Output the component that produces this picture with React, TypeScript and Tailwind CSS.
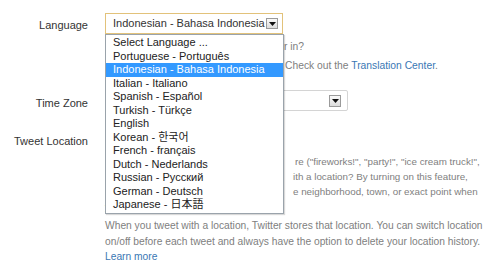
import React from "react";

const languages = [
  "Select Language ...",
  "Portuguese - Português",
  "Indonesian - Bahasa Indonesia",
  "Italian - Italiano",
  "Spanish - Español",
  "Turkish - Türkçe",
  "English",
  "Korean - 한국어",
  "French - français",
  "Dutch - Nederlands",
  "Russian - Русский",
  "German - Deutsch",
  "Japanese - 日本語",
];

function ArrowButton({ className }: { className: string }) {
  return (
    <span
      className={`flex items-center justify-center border border-[#9a9a9a] bg-gradient-to-b from-[#fafafa] to-[#dcdcdc] ${className}`}
    >
      <svg width="7" height="4" viewBox="0 0 7 4">
        <path d="M0 0h7L3.5 4z" fill="#111" />
      </svg>
    </span>
  );
}

// start of a line that sits under the open language list
function Hidden({ w, children }: { w: string; children: React.ReactNode }) {
  return <span className={`inline-block overflow-hidden whitespace-nowrap align-top ${w}`}>{children}</span>;
}

export default function App() {
  return (
    <div className="w-[500px] h-[273px] overflow-hidden bg-white font-['Liberation_Sans','Noto_Sans_CJK_KR','Noto_Sans_CJK_JP',sans-serif]">
      <div className="pt-[13px]">
        {/* Language */}
        <div className="flex">
          <div className="w-[88px] shrink-0 pt-[2px] text-right text-[11px] leading-[21px] text-[#333]">Language</div>
          <div className="ml-[17px] w-[385px]">
            <div className="relative w-[178px]">
              <div className="flex h-[21px] items-center justify-between border border-[#e2c27a] bg-white pl-[7px] pr-[4px] text-[11px] text-[#333]">
                <span className="whitespace-nowrap">Indonesian - Bahasa Indonesia</span>
                <ArrowButton className="h-[11px] w-[12px]" />
              </div>
              <ul className="absolute left-0 top-full z-10 w-[179px] border border-[#9aa3ab] bg-white py-[1px] shadow-[1px_1px_1px_rgba(0,0,0,0.15)]">
                {languages.map((l) => (
                  <li
                    key={l}
                    className={`h-[13.5px] whitespace-nowrap pl-[7px] text-[11px] leading-[13.5px] ${
                      l.startsWith("Indonesian") ? "bg-[#3399ff] text-white" : "text-[#222]"
                    }`}
                  >
                    {l}
                  </li>
                ))}
              </ul>
            </div>
            <p className="mt-[3px] whitespace-nowrap text-[10.3px] leading-[19px] text-[#808080]">
              <Hidden w="w-[179px]">What language would you like to Twitte</Hidden>r in?
              <br />
              <Hidden w="w-[180px]">Interested in helping translate Twitter?</Hidden>Check out the{" "}
              <a className="text-[#3a77b4]">Translation Center</a>.
            </p>
          </div>
        </div>

        {/* Time Zone */}
        <div className="mt-[15px] flex">
          <div className="w-[88px] shrink-0 pt-[3px] text-right text-[11px] leading-[21px] text-[#333]">Time Zone</div>
          <div className="ml-[17px]">
            <div className="flex h-[21px] w-[243px] items-center justify-between rounded-[2px] border border-[#d4d4d4] bg-white pl-[7px] pr-[6px] text-[11px] text-[#333]">
              <span className="whitespace-nowrap">(GMT+07:00) Jakarta</span>
              <ArrowButton className="h-[12px] w-[12px]" />
            </div>
          </div>
        </div>

        {/* Tweet Location */}
        <div className="mt-[20px] flex">
          <div className="w-[88px] shrink-0 text-right text-[11px] leading-[14px] text-[#333]">Tweet Location</div>
          <div className="ml-[17px] w-[385px]">
            <label className="flex items-center gap-[5px] text-[11px] leading-[14px] text-[#333]">
              <span className="h-[12px] w-[12px] border border-[#999] bg-white" />
              Add a location to your tweets
            </label>
            <p className="mt-[6px] whitespace-nowrap text-[9.8px] leading-[15px] text-[#808080]">
              <Hidden w="w-[190px]">Ever wanted to tell everyone whe</Hidden>re ("fireworks!", "party!", "ice cream truck!",
              <br />
              <Hidden w="w-[188px]">etc.), or just wanted to tweet w</Hidden>ith a location? By turning on this feature,
              <br />
              <Hidden w="w-[188px]">your followers will be able to see th</Hidden>e neighborhood, town, or exact point when
              <br />
              you tweet.
            </p>
            <p className="mt-[4px] whitespace-nowrap text-[10.25px] leading-[15.5px] text-[#808080]">
              When you tweet with a location, Twitter stores that location. You can switch location
              <br />
              on/off before each tweet and always have the option to delete your location history.
              <br />
              <a className="text-[#3a77b4]">Learn more</a>
            </p>
          </div>
        </div>
      </div>
    </div>
  );
}
